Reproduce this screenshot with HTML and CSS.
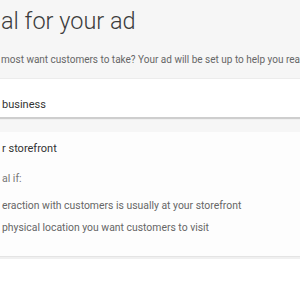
FILE: index.html
```html
<!DOCTYPE html>
<html lang="en">
<head>
  <meta charset="UTF-8" />
  <title>Goal for your ad</title>
  <link rel="stylesheet" href="styles.css">
</head>
<body>
  <div class="page">
    <h1 class="title">al for your ad</h1>
    <p class="subtitle">most want customers to take? Your ad will be set up to help you reach them</p>

    <div class="option selected">
      <span class="option-name">business</span>
    </div>

    <div class="option expanded">
      <div class="option-name">r storefront</div>
      <p class="ideal">al if:</p>
      <ul class="reasons">
        <li>eraction with customers is usually at your storefront</li>
        <li>physical location you want customers to visit</li>
      </ul>
    </div>

    <div class="option empty"></div>
  </div>
</body>
</html>
```

FILE: styles.css
```css
body {
  margin: 0;
  background-color: #f6f6f6;
  font-family: Roboto, "Liberation Sans", sans-serif;
  overflow: hidden;
}
.page {
  width: 300px;
  height: 300px;
  overflow: hidden;
  padding-left: 1px;
  box-sizing: border-box;
}
.title,
.subtitle,
.option-name,
.ideal,
.reasons li {
  white-space: nowrap;
  overflow: hidden;
}
.title {
  margin: 0;
  padding-top: 6px;
  font-size: 23.5px;
  line-height: 30px;
  font-weight: 300;
  color: #3c3c3c;
}
.subtitle {
  margin: 17px 0 0;
  font-size: 10px;
  line-height: 13px;
  color: #666;
}
.option {
  background: #fff;
  margin-left: -1px;
  padding-left: 2px;
  box-sizing: border-box;
}
.option-name {
  font-size: 11px;
  line-height: 13px;
  color: #333;
}
.selected {
  margin-top: 12px;
  height: 39px;
  padding-top: 14px;
  border-top: 1px solid #ececec;
  box-shadow: 0 2px 1px rgba(0, 0, 0, 0.16);
}
.expanded {
  margin-top: 15px;
  height: 125px;
  padding-top: 10px;
  border-bottom: 1px solid #e4e4e4;
  box-shadow: 0 2px 0 #f0f0f0;
  background: #fdfdfd;
}
.ideal {
  margin: 17px 0 0;
  font-size: 10.5px;
  line-height: 13px;
  color: #777;
}
.reasons {
  list-style: none;
  margin: 10px 0 0;
  padding: 0;
}
.reasons li {
  font-size: 10.4px;
  line-height: 22px;
  color: #666;
}
.empty {
  margin-top: 2px;
  height: 42px;
  border-bottom: 1px solid #e4e4e4;
}
```
